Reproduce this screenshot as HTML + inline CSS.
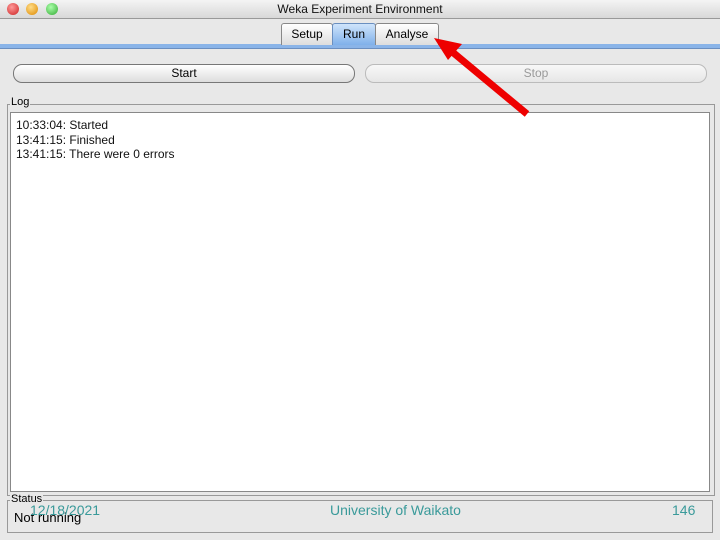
<!DOCTYPE html>
<html><head><style>
body{margin:0;width:720px;height:540px;overflow:hidden;background:#e8e8e8;font-family:"Liberation Sans",sans-serif;position:relative}
.a{position:absolute}
</style></head><body>
<div class="a" style="left:0;top:0;width:720px;height:18px;background:linear-gradient(#f4f4f4,#d8d8d8);border-bottom:1px solid #999"></div>
<div class="a" style="left:0;top:2px;width:720px;text-align:center;font-size:12px;color:#111">Weka Experiment Environment</div>
<div class="a" style="left:7px;top:3px;width:12px;height:12px;border-radius:50%;background:radial-gradient(circle at 40% 35%,#f99,#c22)"></div>
<div class="a" style="left:26px;top:3px;width:12px;height:12px;border-radius:50%;background:radial-gradient(circle at 40% 35%,#fd8,#d80)"></div>
<div class="a" style="left:46px;top:3px;width:12px;height:12px;border-radius:50%;background:radial-gradient(circle at 40% 35%,#afa,#3a3)"></div>
<div class="a" style="left:0;top:44px;width:720px;height:4px;background:#8ab4e8;border-bottom:1px solid #6b8fc0"></div>
<div class="a" style="left:281px;top:23px;width:50px;height:21px;background:linear-gradient(#fff,#ddd);border:1px solid #888;border-bottom:none;border-radius:3px 3px 0 0;font-size:12px;text-align:center;line-height:21px">Setup</div>
<div class="a" style="left:332px;top:23px;width:42px;height:21px;background:linear-gradient(#cfe4fb,#7fb0ea);border:1px solid #6a8fc0;border-bottom:none;border-radius:3px 3px 0 0;font-size:12px;text-align:center;line-height:21px">Run</div>
<div class="a" style="left:375px;top:23px;width:62px;height:21px;background:linear-gradient(#fff,#ddd);border:1px solid #888;border-bottom:none;border-radius:3px 3px 0 0;font-size:12px;text-align:center;line-height:21px">Analyse</div>
<div class="a" style="left:13px;top:64px;width:340px;height:17px;border:1px solid #777;border-radius:9px;background:linear-gradient(#fff,#ddd);font-size:12px;text-align:center;line-height:17px">Start</div>
<div class="a" style="left:365px;top:64px;width:340px;height:17px;border:1px solid #bbb;border-radius:9px;background:linear-gradient(#f8f8f8,#e6e6e6);font-size:12px;text-align:center;line-height:17px;color:#999">Stop</div>
<div class="a" style="left:7px;top:104px;width:706px;height:390px;border:1px solid #999"></div>
<div class="a" style="left:10px;top:96px;font-size:11px;background:#e8e8e8;padding:0 1px">Log</div>
<div class="a" style="left:10px;top:112px;width:698px;height:378px;background:#fff;border:1px solid #888"></div>
<div class="a" style="left:16px;top:118px;font-size:12px;line-height:14.5px;color:#111">10:33:04: Started<br>13:41:15: Finished<br>13:41:15: There were 0 errors</div>
<div class="a" style="left:7px;top:500px;width:704px;height:31px;border:1px solid #999"></div>
<div class="a" style="left:10px;top:493px;font-size:11px;background:#e8e8e8;padding:0 1px">Status</div>
<div class="a" style="left:14px;top:510px;font-size:13px">Not running</div>
<div class="a" style="left:30px;top:502px;font-size:14px;color:#3a9a9a">12/18/2021</div>
<div class="a" style="left:330px;top:502px;font-size:14px;color:#3a9a9a">University of Waikato</div>
<div class="a" style="left:672px;top:502px;font-size:14px;color:#3a9a9a">146</div>
<svg class="a" style="left:0;top:0" width="720" height="540"><line x1="527" y1="114" x2="450" y2="50" stroke="#e00" stroke-width="7"/><polygon points="434,38 462,44 448,60" fill="#e00"/></svg>
</body></html>
